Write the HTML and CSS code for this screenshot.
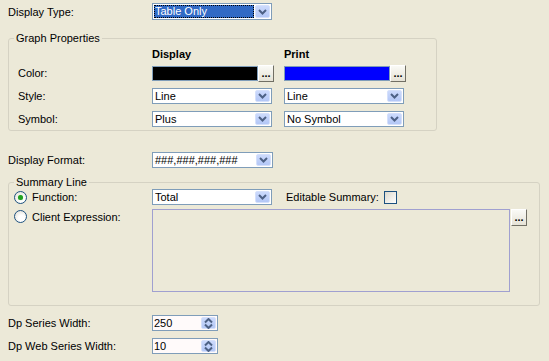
FILE: index.html
```html
<!DOCTYPE html>
<html>
<head>
    <title>Series Properties</title>
    <link rel="stylesheet" href="styles.css">
</head>
<body>
<div class="form">
    <div class="row first">
        <span class="label">Display Type:</span>
        <div class="combo focus">
            <span class="combo-text selected">Table Only</span>
            <span class="combo-btn"><svg width="9" height="6" viewBox="0 0 9 6"><path d="M1 1 L4.5 4.5 L8 1" fill="none" stroke="#4D6185" stroke-width="2"/></svg></span>
        </div>
    </div>

    <fieldset class="group graph">
        <legend>Graph Properties</legend>
        <div class="group-body">
            <div class="row head">
                <span class="flabel"></span>
                <span class="col">Display</span>
                <span class="col">Print</span>
            </div>
            <div class="row color-row">
                <span class="flabel">Color:</span>
                <div class="col"><span class="swatch black"></span><button class="dots">...</button></div>
                <div class="col"><span class="swatch blue"></span><button class="dots">...</button></div>
            </div>
            <div class="row">
                <span class="flabel">Style:</span>
                <div class="col"><div class="combo"><span class="combo-text">Line</span><span class="combo-btn"><svg width="9" height="6" viewBox="0 0 9 6"><path d="M1 1 L4.5 4.5 L8 1" fill="none" stroke="#4D6185" stroke-width="2"/></svg></span></div></div>
                <div class="col"><div class="combo"><span class="combo-text">Line</span><span class="combo-btn"><svg width="9" height="6" viewBox="0 0 9 6"><path d="M1 1 L4.5 4.5 L8 1" fill="none" stroke="#4D6185" stroke-width="2"/></svg></span></div></div>
            </div>
            <div class="row">
                <span class="flabel">Symbol:</span>
                <div class="col"><div class="combo"><span class="combo-text">Plus</span><span class="combo-btn"><svg width="9" height="6" viewBox="0 0 9 6"><path d="M1 1 L4.5 4.5 L8 1" fill="none" stroke="#4D6185" stroke-width="2"/></svg></span></div></div>
                <div class="col"><div class="combo"><span class="combo-text">No Symbol</span><span class="combo-btn"><svg width="9" height="6" viewBox="0 0 9 6"><path d="M1 1 L4.5 4.5 L8 1" fill="none" stroke="#4D6185" stroke-width="2"/></svg></span></div></div>
            </div>
        </div>
    </fieldset>

    <div class="row format-row">
        <span class="label">Display Format:</span>
        <div class="combo wide"><span class="combo-text">###,###,###,###</span><span class="combo-btn"><svg width="9" height="6" viewBox="0 0 9 6"><path d="M1 1 L4.5 4.5 L8 1" fill="none" stroke="#4D6185" stroke-width="2"/></svg></span></div>
    </div>

    <fieldset class="group summary">
        <legend>Summary Line</legend>
        <div class="group-body">
            <div class="row">
                <span class="rlabel"><span class="radio checked"></span>Function:</span>
                <div class="combo"><span class="combo-text">Total</span><span class="combo-btn"><svg width="9" height="6" viewBox="0 0 9 6"><path d="M1 1 L4.5 4.5 L8 1" fill="none" stroke="#4D6185" stroke-width="2"/></svg></span></div>
                <span class="edit-label">Editable Summary:</span>
                <span class="check"></span>
            </div>
            <div class="expr-row">
                <span class="rlabel"><span class="radio"></span>Client Expression:</span>
                <div class="expr"></div>
                <button class="dots">...</button>
            </div>
        </div>
    </fieldset>

    <div class="row spin-row">
        <span class="label">Dp Series Width:</span>
        <div class="spin"><span class="spin-text">250</span><span class="spin-btn"><svg width="9" height="11" viewBox="0 0 9 11"><path d="M1 4.5 L4.5 1 L8 4.5 M1 6.5 L4.5 10 L8 6.5" fill="none" stroke="#4D6185" stroke-width="2"/></svg></span></div>
    </div>
    <div class="row spin-row">
        <span class="label">Dp Web Series Width:</span>
        <div class="spin"><span class="spin-text">10</span><span class="spin-btn"><svg width="9" height="11" viewBox="0 0 9 11"><path d="M1 4.5 L4.5 1 L8 4.5 M1 6.5 L4.5 10 L8 6.5" fill="none" stroke="#4D6185" stroke-width="2"/></svg></span></div>
    </div>
</div>
</body>
</html>
```

FILE: styles.css
```css
* {
    box-sizing: border-box;
}
body {
    margin: 0;
    background: #ECE9D8;
    font-family: "Liberation Sans", Arial, sans-serif;
    font-size: 11px;
    color: #000;
}
.form {
    padding: 3px 0 0 8px;
}
.row {
    display: flex;
    align-items: center;
    height: 16px;
}
.row.first {
    height: 17px;
}
.label {
    width: 144px;
}

/* combo box */
.combo {
    display: flex;
    width: 120px;
    height: 16px;
    border: 1px solid #7F9DB9;
    background: #fff;
    padding: 1px;
}
.first .combo {
    height: 17px;
}
.combo.wide {
    width: 121px;
}
.combo-text {
    flex: 1;
    line-height: 12px;
    padding-left: 1px;
    white-space: nowrap;
    overflow: hidden;
}
.combo-text.selected {
    background: #316AC5;
    color: #fff;
    outline: 1px dotted #000;
    outline-offset: -1px;
    line-height: 13px;
    margin-right: 1px;
}
.combo-btn {
    width: 15px;
    display: flex;
    align-items: center;
    justify-content: center;
    background: linear-gradient(#CCDAFC, #B3C7F6);
    border: 1px solid #D5E0FB;
    border-radius: 2px;
}

/* group boxes */
.group {
    margin: 12px 0 0;
    padding: 0;
    border: 1px solid #D5D2C3;
    border-radius: 3px;
}
.group legend {
    margin-left: 5px;
    padding: 0 2px;
    line-height: 13px;
}
.graph {
    width: 429px;
}
.graph .group-body {
    padding: 2px 0 3px 9px;
}
.graph .row + .row {
    margin-top: 7px;
}
.graph .row.head {
    height: 13px;
}
.graph .row.head + .row {
    margin-top: 5px;
}
.flabel {
    width: 134px;
}
.col {
    width: 132px;
    display: flex;
    align-items: center;
}
.head .col {
    font-weight: bold;
}
.swatch {
    width: 106px;
    height: 15px;
    border: 1px solid #7F9DB9;
}
.swatch.black {
    background: #000;
}
.swatch.blue {
    background: #0000FF;
}
.dots {
    width: 16px;
    height: 17px;
    padding: 0 0 3px;
    border: 1px solid;
    border-color: #fff #716F64 #716F64 #fff;
    background: linear-gradient(#FAFAF6, #E6E3D6);
    font-family: "Liberation Sans", Arial, sans-serif;
    font-size: 11px;
    font-weight: bold;
    line-height: 10px;
    display: flex;
    align-items: flex-end;
    justify-content: center;
}

.format-row {
    margin-top: 21px;
}

.summary {
    margin-top: 8px;
    width: 532px;
}
.summary .group-body {
    padding: 0 0 13px 5px;
}
.rlabel {
    width: 138px;
    display: flex;
    align-items: center;
    gap: 5px;
    height: 13px;
}
.radio {
    width: 13px;
    height: 13px;
    border: 1px solid #1C5180;
    border-radius: 50%;
    background: radial-gradient(circle at 60% 65%, #fff 30%, #DCD9CD);
    display: flex;
    align-items: center;
    justify-content: center;
}
.radio.checked::after {
    content: "";
    width: 5px;
    height: 5px;
    border-radius: 50%;
    background: #21A121;
    box-shadow: 0 0 1px #7BD47B;
}
.edit-label {
    margin-left: 14px;
    width: 98px;
}
.check {
    width: 13px;
    height: 13px;
    border: 1px solid #1C5180;
    background: linear-gradient(135deg, #DCD9CD, #fff);
}
.expr-row {
    display: flex;
    align-items: flex-start;
    margin-top: 4px;
}
.expr-row .rlabel {
    margin-top: 1px;
}
.expr {
    width: 358px;
    height: 83px;
    border: 1px solid #A0A0D0;
    background: #ECE9D8;
}
.expr-row .dots {
    margin-left: 1px;
}

.spin-row {
    margin-top: 7px;
}
.summary + .spin-row {
    margin-top: 9px;
}
.spin {
    display: flex;
    width: 66px;
    height: 16px;
    border: 1px solid #7F9DB9;
    background: #FFFAFA;
    padding: 1px;
}
.spin-text {
    flex: 1;
    line-height: 12px;
}
.spin-btn {
    width: 15px;
    display: flex;
    align-items: center;
    justify-content: center;
    background: linear-gradient(#CCDAFC, #B3C7F6);
    border: 1px solid #D5E0FB;
    border-radius: 2px;
}
```
